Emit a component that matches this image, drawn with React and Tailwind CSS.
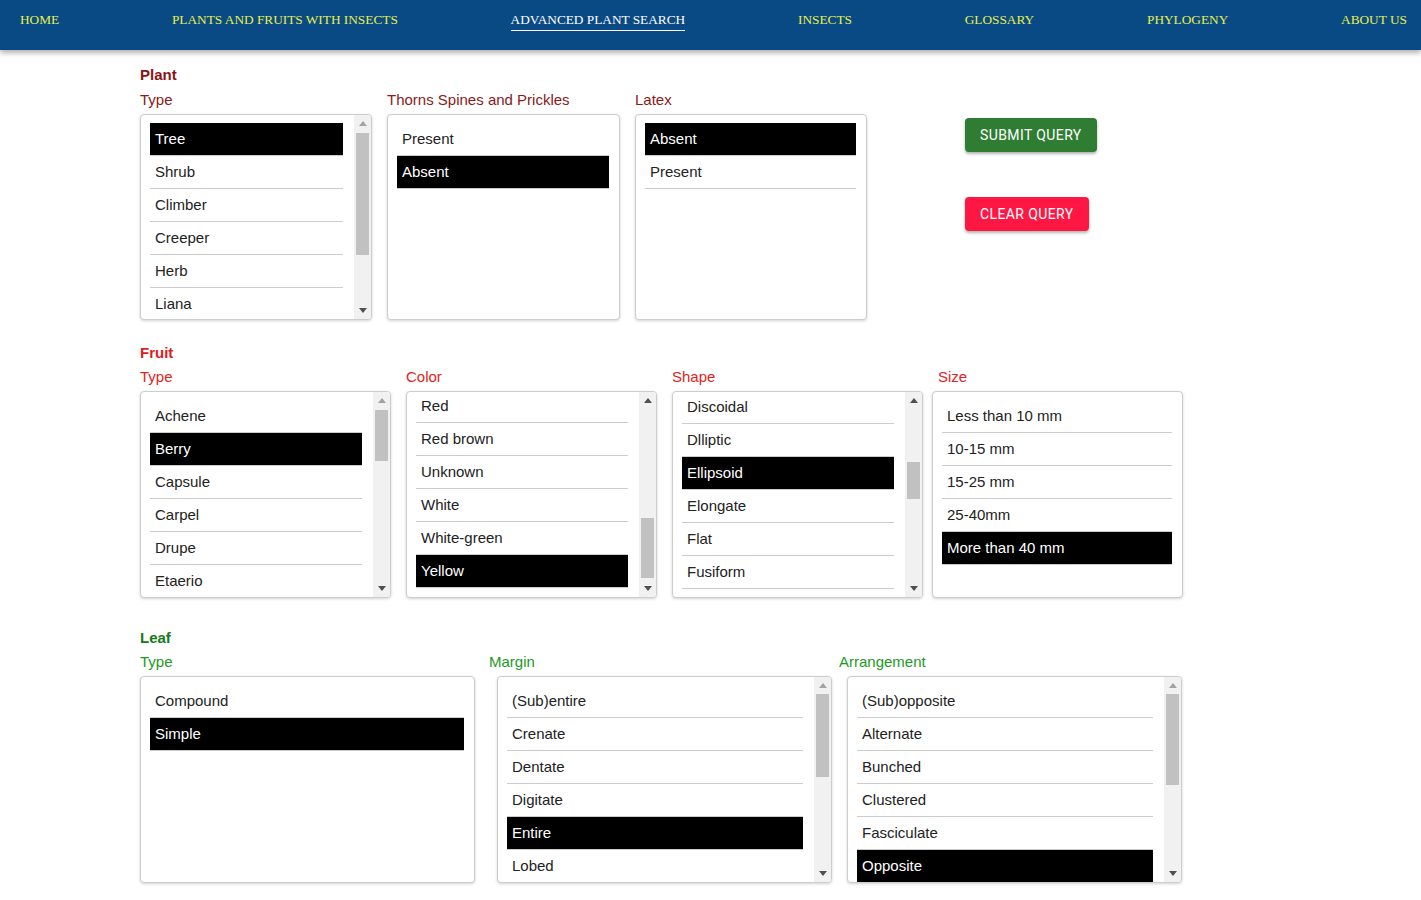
import React from 'react';

const navItems = [
  'HOME',
  'PLANTS AND FRUITS WITH INSECTS',
  'ADVANCED PLANT SEARCH',
  'INSECTS',
  'GLOSSARY',
  'PHYLOGENY',
  'ABOUT US',
];

const Navbar = () => (
  <nav className="h-[50px] bg-[#0a4a84] shadow-[0_3px_5px_rgba(0,0,0,0.3)] flex justify-between items-start pl-[20px] pr-[14px] pt-[12px] font-['Liberation_Serif',serif] text-[13.3px] leading-[16px]">
    {navItems.map((item) => (
      <a
        key={item}
        href="#"
        className={
          item === 'ADVANCED PLANT SEARCH'
            ? 'text-white border-b border-white pb-[2px]'
            : 'text-[#e6ef4c]'
        }
      >
        {item}
      </a>
    ))}
  </nav>
);

const Arrow = ({ up, disabled }) => (
  <div className="h-[17px] flex items-center justify-center">
    <svg width="8" height="5" viewBox="0 0 8 5">
      <path
        d={up ? 'M0 5 L4 0 L8 5 Z' : 'M0 0 L8 0 L4 5 Z'}
        fill={disabled ? '#a3a3a3' : '#505050'}
      />
    </svg>
  </div>
);

const Scrollbar = ({ top, height, upDisabled }) => (
  <div className="w-[17px] bg-[#f1f1f1] flex flex-col shrink-0">
    <Arrow up disabled={upDisabled} />
    <div className="flex-1 px-[2px]">
      <div className="bg-[#c1c1c1]" style={{ marginTop: top, height }} />
    </div>
    <Arrow />
  </div>
);

const ListBox = ({ items, selected = [], width, height, offset = '', scroll }) => (
  <div
    className={`${width} ${height} bg-white border border-[#cdcdcd] rounded-[4px] shadow-[0_1px_3px_rgba(0,0,0,0.18)] flex overflow-hidden`}
  >
    <div className={`flex-1 overflow-hidden pl-[9px] pt-[8px] ${scroll ? 'pr-[11px]' : 'pr-[10px]'}`}>
      <div className={offset}>
        {items.map((item) => (
          <div
            key={item}
            className={`h-[33px] flex items-center pl-[5px] border-b border-[#cccccc] text-[15px] ${
              selected.includes(item) ? 'bg-black text-white' : 'text-[#222]'
            }`}
          >
            {item}
          </div>
        ))}
      </div>
    </div>
    {scroll && <Scrollbar {...scroll} />}
  </div>
);

const Label = ({ children, className }) => (
  <div className={`text-[15px] leading-[20px] mb-[4px] ${className}`}>{children}</div>
);

export default function App() {
  return (
    <div className="min-h-screen bg-white font-['Liberation_Sans',Arial,sans-serif]">
      <Navbar />

      <main className="pl-[140px] pt-[15px]">
        {/* Plant */}
        <div className="text-[15px] leading-[20px] font-bold text-[#8a1414] mb-[5px]">Plant</div>
        <div className="flex gap-[15px] items-start">
          <div className="w-[232px]">
            <Label className="text-[#8a1a1a]">Type</Label>
            <ListBox
              width="w-[232px]"
              height="h-[206px]"
              items={['Tree', 'Shrub', 'Climber', 'Creeper', 'Herb', 'Liana']}
              selected={['Tree']}
              scroll={{ top: 1, height: 122, upDisabled: true }}
            />
          </div>
          <div className="w-[233px]">
            <Label className="text-[#8a1a1a]">Thorns Spines and Prickles</Label>
            <ListBox
              width="w-[233px]"
              height="h-[206px]"
              items={['Present', 'Absent']}
              selected={['Absent']}
            />
          </div>
          <div className="w-[232px]">
            <Label className="text-[#8a1a1a]">Latex</Label>
            <ListBox
              width="w-[232px]"
              height="h-[206px]"
              items={['Absent', 'Present']}
              selected={['Absent']}
            />
          </div>
          <div className="ml-[83px] pt-[28px] flex flex-col items-start gap-[45px] font-['Roboto',sans-serif]">
            <button className="h-[34px] px-[15px] rounded-[4px] bg-[#2e7d32] text-white text-[14px] font-normal tracking-[0.4px] shadow-[0_2px_3px_rgba(0,0,0,0.3)]">
              SUBMIT QUERY
            </button>
            <button className="h-[34px] px-[15px] rounded-[4px] bg-[#ff1744] text-white text-[14px] font-normal tracking-[0.4px] shadow-[0_2px_3px_rgba(0,0,0,0.3)]">
              CLEAR QUERY
            </button>
          </div>
        </div>

        {/* Fruit */}
        <div className="mt-[23px] text-[15px] leading-[20px] font-bold text-[#e01b1b] mb-[4px]">Fruit</div>
        <div className="flex gap-[15px] items-start">
          <div className="w-[251px]">
            <Label className="text-[#e32222]">Type</Label>
            <ListBox
              width="w-[251px]"
              height="h-[207px]"
              items={['Achene', 'Berry', 'Capsule', 'Carpel', 'Drupe', 'Etaerio']}
              selected={['Berry']}
              scroll={{ top: 1, height: 51, upDisabled: true }}
            />
          </div>
          <div className="w-[251px]">
            <Label className="text-[#e32222]">Color</Label>
            <ListBox
              width="w-[251px]"
              height="h-[207px]"
              offset="-mt-[10px]"
              items={['Red', 'Red brown', 'Unknown', 'White', 'White-green', 'Yellow']}
              selected={['Yellow']}
              scroll={{ top: 109, height: 60 }}
            />
          </div>
          <div className="w-[251px]">
            <Label className="text-[#e32222]">Shape</Label>
            <ListBox
              width="w-[251px]"
              height="h-[207px]"
              offset="-mt-[9px]"
              items={['Discoidal', 'Dlliptic', 'Ellipsoid', 'Elongate', 'Flat', 'Fusiform']}
              selected={['Ellipsoid']}
              scroll={{ top: 53, height: 37 }}
            />
          </div>
          <div className="w-[251px]">
            <Label className="text-[#e32222]">Size</Label>
            <div className="-ml-[6px]">
              <ListBox
                width="w-[251px]"
                height="h-[207px]"
                items={['Less than 10 mm', '10-15 mm', '15-25 mm', '25-40mm', 'More than 40 mm']}
                selected={['More than 40 mm']}
              />
            </div>
          </div>
        </div>

        {/* Leaf */}
        <div className="mt-[30px] text-[15px] leading-[20px] font-bold text-[#167a16] mb-[4px]">Leaf</div>
        <div className="flex items-start">
          <div className="w-[349px]">
            <Label className="text-[#229a22]">Type</Label>
            <ListBox
              width="w-[335px]"
              height="h-[207px]"
              items={['Compound', 'Simple']}
              selected={['Simple']}
            />
          </div>
          <div className="w-[350px]">
            <Label className="text-[#229a22]">Margin</Label>
            <div className="ml-[8px]">
              <ListBox
                width="w-[335px]"
                height="h-[207px]"
                items={['(Sub)entire', 'Crenate', 'Dentate', 'Digitate', 'Entire', 'Lobed']}
                selected={['Entire']}
                scroll={{ top: 0, height: 83, upDisabled: true }}
              />
            </div>
          </div>
          <div className="w-[350px]">
            <Label className="text-[#229a22]">Arrangement</Label>
            <div className="ml-[8px]">
              <ListBox
                width="w-[335px]"
                height="h-[207px]"
                items={['(Sub)opposite', 'Alternate', 'Bunched', 'Clustered', 'Fasciculate', 'Opposite']}
                selected={['Opposite']}
                scroll={{ top: 0, height: 91, upDisabled: true }}
              />
            </div>
          </div>
        </div>
        <div className="h-[20px]" />
      </main>
    </div>
  );
}
